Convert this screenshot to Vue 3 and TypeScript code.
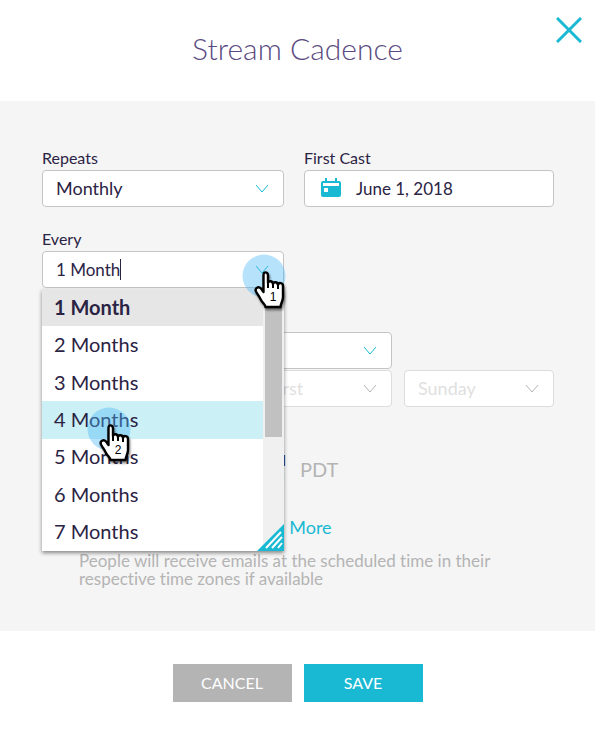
<script setup lang="ts">
import { ref } from 'vue'

interface Click {
  step: number
  place: string
}

const repeats = ref('Monthly')
const firstCast = ref('June 1, 2018')
const interval = ref('1 Month')
const hovered = 4
const months = Array.from({ length: 7 }, (_, i) => ({
  value: i + 1,
  label: `${i + 1} Month${i ? 's' : ''}`,
}))
const clicks: Click[] = [
  { step: 1, place: 'on-arrow' },
  { step: 2, place: 'on-option' },
]
</script>

<template>
  <main class="dialog" role="dialog" aria-labelledby="dialog-title">
    <header class="head">
      <h1 id="dialog-title">Stream Cadence</h1>
      <button class="close" type="button" aria-label="Close">
        <svg viewBox="0 0 26 26"><path d="M1 1L25 25M25 1L1 25" /></svg>
      </button>
    </header>

    <form class="body" @submit.prevent>
      <div class="pair">
        <div class="group">
          <label for="repeats">Repeats</label>
          <div class="field">
            <select id="repeats" v-model="repeats"><option>Monthly</option><option>Weekly</option></select>
            <svg class="chevron" viewBox="0 0 14 9"><path d="M1 1L7 8L13 1" /></svg>
          </div>
        </div>
        <div class="group">
          <label for="first-cast">First Cast</label>
          <div class="field dated">
            <svg class="calendar" viewBox="0 0 20 20">
              <path d="M2 3H4V0H6V3H14V0H16V3H18Q20 3 20 5V17Q20 19 18 19H2Q0 19 0 17V5Q0 3 2 3Z" />
              <path class="paper" d="M2 5H18V8H2ZM3 10H7V14H3Z" />
            </svg>
            <input id="first-cast" v-model="firstCast" type="text" />
          </div>
        </div>
        <div class="group combo">
          <label for="every">Every</label>
          <div class="field">
            <input id="every" v-model="interval" class="fit" type="text" role="combobox" aria-expanded="true" aria-controls="months" />
            <span class="caret"></span>
            <svg class="chevron" viewBox="0 0 14 9"><path d="M1 1L7 8L13 1" /></svg>
          </div>
          <div class="menu">
            <ul id="months" role="listbox">
              <li
                v-for="m in months"
                :key="m.value"
                role="option"
                :aria-selected="m.label === interval"
                :class="{ selected: m.label === interval, hovered: m.value === hovered }"
              >{{ m.label }}</li>
            </ul>
            <div class="track"><div class="thumb"></div></div>
            <svg class="grip" viewBox="0 0 27 27">
              <path d="M27 0V27H0Z" />
              <path class="line" d="M9 24L24 8M15 24L25 13M21 24L25 19" />
            </svg>
          </div>
          <div v-for="c in clicks" :key="c.step" class="click" :class="c.place">
            <svg viewBox="0 0 50 60">
              <circle cx="22" cy="22" r="21.5" />
              <path
                class="hand"
                d="M21.5 38L19 34.5C16.5 32 12.5 34 14 37.5C16 41 17.5 43 19 46C20.5 49 23 50 23.5 53H38.5C38.5 50 41 47 41 43V32C41 28.5 36.5 28 36 31C35.5 27.5 31.5 27.5 31 30C30.5 26.5 26.5 26.5 26 29V21C25.5 17.5 21.5 17.5 21.5 21V38Z"
              />
              <path class="fold" d="M26 28V34M31 29V34M36 30V35" />
              <text x="31" y="47" text-anchor="middle">{{ c.step }}</text>
            </svg>
          </div>
        </div>
      </div>

      <div class="schedule">
        <div class="field wide">
          <select aria-label="Repeat on"></select>
          <svg class="chevron" viewBox="0 0 14 9"><path d="M1 1L7 8L13 1" /></svg>
        </div>
        <div class="field week off">
          <select aria-label="Week" disabled><option>First</option></select>
          <svg class="chevron" viewBox="0 0 14 9"><path d="M1 1L7 8L13 1" /></svg>
        </div>
        <div class="field day off">
          <select aria-label="Day" disabled><option>Sunday</option></select>
          <svg class="chevron" viewBox="0 0 14 9"><path d="M1 1L7 8L13 1" /></svg>
        </div>
      </div>

      <div class="time">
        <span class="meridiem">AM<br />PM</span>
        <span class="zone">PDT</span>
      </div>
      <a class="more" href="#">Learn More</a>
      <p class="note">People will receive emails at the scheduled time in their respective time zones if available</p>
    </form>

    <footer class="foot">
      <button class="cancel" type="button">CANCEL</button>
      <button class="save" type="button">SAVE</button>
    </footer>
  </main>
</template>

<style>
body {
  background: #fff;
}
</style>

<style scoped>
* {
  box-sizing: border-box;
}
.dialog {
  color: #2b2344;
  font: 18px/22px Lato, 'Liberation Sans', sans-serif;
  font-variant-ligatures: none;
}
.head {
  position: relative;
  padding: 30px 60px 35px;
  text-align: center;
}
h1 {
  margin: 0;
  color: #594a80;
  font-size: 30px;
  font-weight: 300;
  line-height: 36px;
}
.close {
  position: absolute;
  top: 17px;
  right: 13px;
  width: 26px;
  height: 26px;
  padding: 0;
  border: 0;
  background: none;
}
svg {
  display: block;
  fill: none;
}
.close path {
  stroke: #1ab9d3;
  stroke-width: 3;
}
.body {
  padding: 48px 41px 43px 42px;
  background: #f5f5f5;
}
.pair {
  display: grid;
  grid-template-columns: 242fr 250fr;
  gap: 23px 20px;
}
.group {
  min-width: 0;
}
.combo {
  position: relative;
}
label {
  display: block;
  height: 21px;
  font-size: 16px;
  line-height: 18px;
}
.field {
  position: relative;
  display: flex;
  align-items: center;
  height: 37px;
  padding: 0 0 1px 13px;
  border: 1px solid #c4c4c4;
  border-radius: 4px;
  background: #fff;
}
select,
input {
  flex: 1;
  min-width: 0;
  height: 100%;
  padding: 0;
  border: 0;
  outline: 0;
  appearance: none;
  background: none;
  color: inherit;
  font: inherit;
  opacity: 1;
}
input {
  font-size: 17px;
}
.fit {
  flex: none;
  field-sizing: content;
}
.caret {
  width: 1px;
  height: 21px;
  background: #2b2344;
}
.chevron {
  position: absolute;
  right: 14px;
  width: 14px;
  height: 9px;
  stroke: #1ab9d3;
}
.dated {
  gap: 15px;
  padding-left: 16px;
}
.calendar {
  width: 20px;
  height: 20px;
  fill: #1ab9d3;
}
.paper {
  fill: #fff;
}
.menu {
  position: absolute;
  z-index: 2;
  top: 59px;
  left: 0;
  display: flex;
  width: 100%;
  height: 262px;
  background: #fff;
  box-shadow: 0 2px 4px rgba(0, 0, 0, 0.45);
}
ul {
  display: grid;
  flex: 1;
  grid-auto-rows: 1fr;
  margin: 0;
  padding: 0;
  list-style: none;
}
li {
  display: flex;
  align-items: center;
  padding: 0 0 2px 12px;
  font-size: 20px;
}
.selected {
  background: #e6e6e6;
  font-weight: 700;
}
.hovered {
  background: #cbf0f6;
}
.track {
  width: 21px;
  padding: 0 2px;
  background: #f0f0f0;
}
.thumb {
  height: 148px;
  background: #c1c1c1;
}
.grip {
  position: absolute;
  right: 0;
  bottom: 0;
  width: 27px;
  height: 27px;
  fill: #1ab9d3;
}
.line {
  stroke: #fff;
  stroke-width: 2;
}
.click {
  position: absolute;
  z-index: 3;
  width: 50px;
  height: 60px;
  pointer-events: none;
}
.click svg {
  overflow: visible;
}
.on-arrow {
  top: 24px;
  left: 200px;
}
.on-option {
  top: 177px;
  left: 45px;
}
circle {
  fill: #4bb6f7;
  opacity: 0.4;
}
.hand {
  fill: #fff;
  stroke: #000;
  stroke-width: 2.4;
  stroke-linejoin: round;
  filter: drop-shadow(1px 2px 1px rgba(0, 0, 0, 0.5));
}
.fold {
  stroke: #000;
  stroke-width: 2;
}
text {
  fill: #000;
  font: 12px 'Liberation Sans', sans-serif;
}
.schedule {
  display: flex;
  flex-wrap: wrap;
  justify-content: flex-end;
  gap: 1px 12px;
  margin-top: 44px;
}
.wide {
  flex: none;
  width: calc(100% - 162px);
  margin-right: 162px;
}
.week {
  width: 138px;
}
.day {
  width: 150px;
}
.off {
  border-color: #dcdcdc;
  color: #dfdfdf;
}
.off .chevron {
  stroke: #b5b5b5;
}
.time {
  display: flex;
  align-items: center;
  gap: 14px;
  margin: 45px 0 0 220px;
}
.meridiem {
  width: 24px;
  font-size: 15px;
  line-height: 17px;
}
.zone {
  color: #b4b4b4;
  font-size: 20px;
}
.more {
  display: block;
  width: max-content;
  margin: 30px 0 0 199px;
  color: #1ab9d3;
  text-decoration: none;
}
.note {
  margin: 14px 50px 0 37px;
  color: #b4b4b4;
  font-size: 17px;
  line-height: 18px;
}
.foot {
  display: flex;
  justify-content: center;
  gap: 12px;
  padding: 33px 0 28px;
}
.foot button {
  width: 119px;
  height: 38px;
  padding: 0;
  border: 0;
  color: #fff;
  font: 16px/20px Lato, 'Liberation Sans', sans-serif;
}
.cancel {
  background: #b4b4b4;
}
.save {
  background: #1ab9d3;
}
</style>
